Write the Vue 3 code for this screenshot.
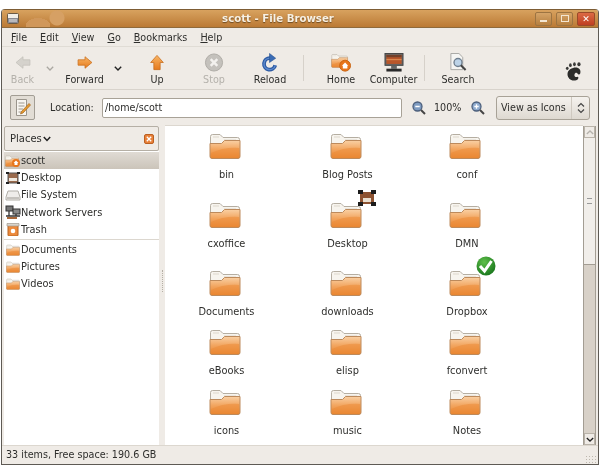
<script setup>
const menus = [['F', 'ile'], ['E', 'dit'], ['V', 'iew'], ['G', 'o'], ['B', 'ookmarks'], ['H', 'elp']]
const rows = [
  [{ n: 'bin' }, { n: 'Blog Posts' }, { n: 'conf' }],
  [{ n: 'cxoffice' }, { n: 'Desktop', e: 'desk' }, { n: 'DMN' }],
  [{ n: 'Documents' }, { n: 'downloads' }, { n: 'Dropbox', e: 'ok' }],
  [{ n: 'eBooks' }, { n: 'elisp' }, { n: 'fconvert' }],
  [{ n: 'icons' }, { n: 'music' }, { n: 'Notes' }],
]
const files = rows.flat()
</script>

<template>
  <div class="window">
    <svg class="defs" width="0" height="0" aria-hidden="true">
      <defs>
        <linearGradient id="fold" x1="0" y1="0" x2="0" y2="1">
          <stop offset="0" stop-color="#f9d0a4" />
          <stop offset="0.5" stop-color="#f2a55f" />
          <stop offset="1" stop-color="#e8842e" />
        </linearGradient>
        <linearGradient id="org" x1="0" y1="0" x2="0" y2="1">
          <stop offset="0" stop-color="#f8b565" />
          <stop offset="1" stop-color="#e67a1c" />
        </linearGradient>
        <radialGradient id="okg" cx=".4" cy=".3" r=".8">
          <stop offset="0" stop-color="#5fbf4a" />
          <stop offset="1" stop-color="#126f18" />
        </radialGradient>
        <symbol id="folder" viewBox="0 0 32 26">
          <path d="M1.500 24V3.500Q1.500 1.500 3.500 1.500H11L14 4.500H28.500Q30.500 4.500 30.500 6.500V24Z" fill="#f7f4ee" stroke="#b5aea2" />
          <path d="M4 4h6M15 7h12" stroke="#ddd7cc" />
          <path d="M1 10.500H12.500L15.500 7.500H31V23.500Q31 25.500 29 25.500H3Q1 25.500 1 23.500Z" fill="url(#fold)" stroke="#bd8a5c" />
          <path d="M2 20Q15 14 30 15V24.500H2Z" fill="#ec8a36" opacity=".5" />
        </symbol>
      </defs>
    </svg>

    <header class="title">
      <svg class="win-icon" width="12" height="11" viewBox="0 0 12 11">
        <rect x=".5" y=".5" width="11" height="10" rx="1" fill="#f2eee8" stroke="#6b5a45" />
        <rect x="1" y="5" width="10" height="5" fill="#8a8a92" />
        <path d="M3 6v3M5 6v3M7 6v3M9 6v3" stroke="#e8e8e8" />
      </svg>
      <div class="title-deco"></div>
      <span class="title-text">scott - File Browser</span>
      <div class="wm">
        <span class="wm-btn"><i class="wm-min"></i></span>
        <span class="wm-btn"><i class="wm-max"></i></span>
        <span class="wm-btn wm-close">✕</span>
      </div>
    </header>

    <nav class="menu">
      <span v-for="m in menus" :key="m[0]"><u>{{ m[0] }}</u>{{ m[1] }}</span>
    </nav>

    <div class="toolbar">
      <div class="tool w-back dim">
        <svg viewBox="-3 -3 26 24"><path d="M1 9 10 1.500V5.500H19V12.500H10V16.500Z" fill="#d5d2cc" stroke="#c3c0ba" /></svg>
        <span>Back</span>
      </div>
      <svg class="drop d-back" width="8" height="5" viewBox="0 0 8 5"><path d="M.8.8 4 4 7.200.8" fill="none" stroke="#aaa7a1" stroke-width="1.300" /></svg>
      <div class="tool w-forward">
        <svg viewBox="-3 -3 26 24"><path d="M19 9 10 1.500V5.500H1V12.500H10V16.500Z" fill="url(#org)" stroke="#c96f1e" /></svg>
        <span>Forward</span>
      </div>
      <svg class="drop d-forward" width="8" height="5" viewBox="0 0 8 5"><path d="M.8.8 4 4 7.200.8" fill="none" stroke="#222" stroke-width="1.400" /></svg>
      <div class="tool w-up">
        <svg viewBox="-3 -2 24 24"><path d="M9 1 17 10H13V19H5V10H1Z" fill="url(#org)" stroke="#c96f1e" /></svg>
        <span>Up</span>
      </div>
      <div class="tool w-stop dim">
        <svg viewBox="0 0 20 20"><circle cx="10" cy="10" r="9" fill="#c4c1bc" stroke="#aeaba5" /><path d="M6.500 6.500 13.500 13.500M13.500 6.500 6.500 13.500" stroke="#f3f1ee" stroke-width="2.600" /></svg>
        <span>Stop</span>
      </div>
      <div class="tool w-reload">
        <svg viewBox="0 0 20 20">
          <path d="M15.500 13A6 6 0 1 1 10 5.500" fill="none" stroke="#2c5aa3" stroke-width="4" />
          <path d="M15.500 13A6 6 0 1 1 10 5.500" fill="none" stroke="#5c8ace" stroke-width="1.500" />
          <path d="M9.500 .5 16 5.500 9.500 10Z" fill="#3b6cb5" stroke="#274f8e" stroke-width=".6" />
        </svg>
        <span>Reload</span>
      </div>
      <i class="tool-sep"></i>
      <div class="tool w-home">
        <svg viewBox="0 0 22 20">
          <use href="#folder" x="0" y="0" width="19" height="16" />
          <circle cx="15.500" cy="13.500" r="6" fill="#e8761c" stroke="#c8620f" />
          <path d="M15.500 10 19 13.500H18V16.500H13V13.500H12Z" fill="#fff" />
        </svg>
        <span>Home</span>
      </div>
      <div class="tool w-computer">
        <svg viewBox="0 0 20 20">
          <rect x=".5" y=".5" width="19" height="12.500" fill="#666" stroke="#444" />
          <rect x="2" y="2" width="16" height="9.500" fill="#b8562a" />
          <path d="M2 2H18V4.500H2Z" fill="#73402a" />
          <path d="M2 7H18" stroke="#e2945a" />
          <path d="M7 13.500H13V16.500H7Z" fill="#666" />
          <rect x="2" y="16.500" width="16" height="3" fill="#2a2a2a" />
        </svg>
        <span>Computer</span>
      </div>
      <i class="tool-sep sep2"></i>
      <div class="tool w-search">
        <svg viewBox="0 0 20 20">
          <path d="M2.500.5H11L15 4.500V17.500H2.500Z" fill="#f5f5f3" stroke="#a5a5a2" />
          <circle cx="10" cy="10" r="4.200" fill="#bcd3e8" stroke="#6f7f8f" stroke-width="1.400" />
          <path d="M13 13 18 18" stroke="#444" stroke-width="2.200" />
        </svg>
        <span>Search</span>
      </div>
      <svg class="foot" width="18" height="21" viewBox="0 0 20 22">
        <path d="M9 7C15 5.500 18 9 17 13C16.500 14.500 14.500 15 14 13.500C13.500 12 11 12 10.500 14.500C10 17 12.500 17.500 13.500 17C15 16.500 15.500 18.500 14 20C11.500 22 5.500 21.500 3.500 17C1.500 12.500 4 8 9 7Z" fill="#2c2c2a" />
        <ellipse cx="2.500" cy="7.500" rx="1.500" ry="1.800" fill="#3a3a38" />
        <ellipse cx="6" cy="4" rx="1.500" ry="2.100" fill="#3a3a38" />
        <ellipse cx="10.500" cy="3" rx="1.500" ry="2.200" fill="#3a3a38" />
        <ellipse cx="15.500" cy="3" rx="1.800" ry="2.300" fill="#3a3a38" />
      </svg>
    </div>

    <div class="location">
      <span class="edit-btn">
        <svg width="16" height="17" viewBox="0 0 16 17">
          <path d="M1.500.5H11.500V16.500H1.500Z" fill="#f7f5f0" stroke="#9a958c" />
          <path d="M3.500 4H9.500M3.500 7H9.500M3.500 10H8M3.500 13H7" stroke="#9c978e" />
          <path d="M14 4.500 15.500 6 8 14 5.500 15 6.500 12.500Z" fill="#e59a2f" stroke="#a4661c" stroke-width=".7" />
        </svg>
      </span>
      <label class="loc-label">Location:</label>
      <div class="loc-input">/home/scott</div>
      <svg class="zoom-a" width="14" height="14" viewBox="0 0 14 14"><circle cx="5.500" cy="5.500" r="4.500" fill="#7f9cc2" stroke="#4c5f7c" stroke-width="1.300" /><path d="M3.300 5.500H7.700" stroke="#fff" stroke-width="1.300" /><path d="M9 9 13 13" stroke="#444" stroke-width="2" /></svg>
      <span class="pct">100%</span>
      <svg class="zoom-b" width="14" height="14" viewBox="0 0 14 14"><circle cx="5.500" cy="5.500" r="4.500" fill="#8fabcf" stroke="#4c5f7c" stroke-width="1.300" /><path d="M3.300 5.500H7.700M5.500 3.300V7.700" stroke="#fff" stroke-width="1.300" /><path d="M9 9 13 13" stroke="#444" stroke-width="2" /></svg>
      <div class="view-select">
        <span class="vs-text">View as Icons</span>
        <span class="vs-arrows">
          <svg width="8" height="12" viewBox="0 0 8 12"><path d="M1 4.500 4 1.500 7 4.500M1 7.500 4 10.500 7 7.500" fill="none" stroke="#444" stroke-width="1.200" /></svg>
        </span>
      </div>
    </div>

    <main class="main">
      <aside class="side">
        <div class="side-head">
          <span class="places">Places</span>
          <svg width="8" height="6" viewBox="0 0 8 6"><path d="M.8 1 4 4.500 7.200 1" fill="none" stroke="#222" stroke-width="1.500" /></svg>
          <svg class="side-close" width="10" height="10" viewBox="0 0 10 10"><rect x=".5" y=".5" width="9" height="9" rx="1.500" fill="#e8813a" stroke="#bb5f20" /><path d="M2.800 2.800 7.200 7.200M7.200 2.800 2.800 7.200" stroke="#fff" stroke-width="1.300" /></svg>
        </div>
        <div class="side-list">
          <div class="side-row sel">
            <svg width="16" height="14" viewBox="0 0 16 14"><use href="#folder" x="0" y="1" width="14" height="12" /><circle cx="11" cy="9" r="4" fill="#e8761c" /><path d="M11 6.500 13.500 9H8.500Z M9.500 9H12.500V11H9.500Z" fill="#fff" /></svg>
            <span>scott</span>
          </div>
          <div class="side-row">
            <svg width="16" height="14" viewBox="0 0 16 14"><rect x="3" y="2" width="10" height="10" fill="#9a6a4c" stroke="#555" /><path d="M1 1H4V3H1ZM12 1H15V3H12ZM1 11H4V13H1ZM12 11H15V13H12Z" fill="#222" /><path d="M4 7H12V10H4Z" fill="#efe9df" /></svg>
            <span>Desktop</span>
          </div>
          <div class="side-row">
            <svg width="16" height="14" viewBox="0 0 16 14"><path d="M3 3H13L15 9V12H1V9Z" fill="#efedea" stroke="#b2afa8" /><path d="M2 10H14" stroke="#9c9992" /></svg>
            <span>File System</span>
          </div>
          <div class="side-row">
            <svg width="16" height="14" viewBox="0 0 16 14"><rect x="1" y="1" width="7" height="5" fill="#777" stroke="#333" /><rect x="8" y="4" width="7" height="5" fill="#8a8a8a" stroke="#333" /><path d="M4 6V11M1 11H15M11 9V11" stroke="#333" stroke-width="1.300" /><rect x="2" y="12" width="10" height="2" fill="#a9683a" /></svg>
            <span>Network Servers</span>
          </div>
          <div class="side-row">
            <svg width="16" height="14" viewBox="0 0 16 14"><rect x="3" y="3" width="10" height="11" rx="1" fill="#ec8a3c" stroke="#b8631f" /><path d="M2 1.500H14V4H2Z" fill="#d9d4cb" stroke="#a09a8f" stroke-width=".7" /><circle cx="8" cy="9" r="2.300" fill="#fff" /></svg>
            <span>Trash</span>
          </div>
          <hr class="side-sep" />
          <div class="side-row">
            <svg width="16" height="14" viewBox="0 0 16 14"><use href="#folder" x="1" y="1" width="14" height="12" /></svg>
            <span>Documents</span>
          </div>
          <div class="side-row">
            <svg width="16" height="14" viewBox="0 0 16 14"><use href="#folder" x="1" y="1" width="14" height="12" /></svg>
            <span>Pictures</span>
          </div>
          <div class="side-row">
            <svg width="16" height="14" viewBox="0 0 16 14"><use href="#folder" x="1" y="1" width="14" height="12" /></svg>
            <span>Videos</span>
          </div>
        </div>
      </aside>

      <div class="pane-handle"><i></i></div>

      <section class="files">
        <div v-for="f in files" :key="f.n" class="file">
          <div class="file-icon">
            <svg width="32" height="26" viewBox="0 0 32 26"><use href="#folder" width="32" height="26" /></svg>
            <svg v-if="f.e === 'desk'" class="emblem em-desk" width="18" height="16" viewBox="0 0 18 16">
              <rect x="2" y="2" width="14" height="12" fill="#8d5230" />
              <path d="M0 0H5V4H0ZM13 0H18V4H13ZM0 12H5V16H0ZM13 12H18V16H13Z" fill="#1c1c1c" />
              <path d="M5 8H13V12H5Z" fill="#e9dfd0" />
            </svg>
            <svg v-if="f.e === 'ok'" class="emblem em-ok" width="20" height="20" viewBox="0 0 20 20">
              <circle cx="10" cy="10" r="9.500" fill="url(#okg)" />
              <path d="M4 10 8.500 15 15.500 5" fill="none" stroke="#fff" stroke-width="3" />
            </svg>
          </div>
          <span class="file-name">{{ f.n }}</span>
        </div>
      </section>

      <div class="scrollbar">
        <span class="sb-btn"><svg width="8" height="5" viewBox="0 0 8 5"><path d="M.8 4 4 1 7.200 4" fill="none" stroke="#b5b2ac" stroke-width="1.300" /></svg></span>
        <span class="sb-thumb"><i></i></span>
        <span class="sb-trough"></span>
        <span class="sb-btn"><svg width="8" height="5" viewBox="0 0 8 5"><path d="M.8 1 4 4 7.200 1" fill="none" stroke="#222" stroke-width="1.300" /></svg></span>
      </div>
    </main>

    <footer class="status">33 items, Free space: 190.6 GB<i class="grip"></i></footer>
  </div>
</template>

<style>
html, body { margin: 0; background: #fff; }
</style>

<style scoped>
.window {
  box-sizing: border-box;
  width: 598px;
  height: 456px;
  margin: 9px 0 0 1px;
  display: flex;
  flex-direction: column;
  background: #efebe6;
  border: 1px solid #5e5a54;
  border-top: 0;
  border-radius: 4px 4px 0 0;
  font-family: "DejaVu Sans", sans-serif;
  font-size: 9.6px;
  color: #2e2e2c;
  overflow: hidden;
  filter: blur(.3px);
}
.defs { flex: none; display: block; }

.title {
  flex: none;
  height: 19px;
  display: flex;
  align-items: center;
  position: relative;
  background: linear-gradient(#d8a25f, #bb7a35);
  border-top: 1px solid #7d5c34;
  border-bottom: 1px solid #8f6a3c;
  box-sizing: border-box;
  padding: 0 3px 0 5px;
}
.win-icon { flex: none; }
.title-deco {
  position: absolute;
  left: 22px;
  top: 0;
  width: 42px;
  height: 17px;
  background:
    radial-gradient(circle at 33px 8px, #d6a064 0 7px, transparent 8px),
    radial-gradient(ellipse 12px 7px at 14px 15px, #d0975a 0 100%, transparent 100%);
}
.title-text {
  position: absolute;
  left: 0;
  right: 44px;
  text-align: center;
  color: #f8f1e4;
  font-weight: bold;
  font-size: 10.200px;
  text-shadow: 0 1px 1px #6d4a20;
}
.wm { margin-left: auto; display: flex; gap: 4px; position: relative; }
.wm-btn {
  box-sizing: border-box;
  width: 17px;
  height: 14px;
  display: flex;
  align-items: center;
  justify-content: center;
  border: 1px solid #9c7442;
  border-radius: 2px;
  background: linear-gradient(#d5a468, #b67f3f);
}
.wm-min { width: 7px; height: 2px; background: #f3e6d2; margin-top: 5px; }
.wm-max { box-sizing: border-box; width: 8px; height: 7px; border: 1px solid #f3e6d2; }
.wm-close {
  width: 18px;
  color: #fff;
  font-size: 9px;
  font-weight: bold;
  background: linear-gradient(#dc6a44, #bf3f22);
  border-color: #9a4a2a;
}

.menu {
  flex: none;
  height: 19px;
  display: flex;
  align-items: center;
  gap: 13px;
  padding-left: 9px;
  box-sizing: border-box;
  border-bottom: 1px solid #e0dcd5;
}

.toolbar {
  flex: none;
  height: 43px;
  display: flex;
  box-sizing: border-box;
  border-bottom: 1px solid #d8d3cc;
}
.tool {
  flex: none;
  display: flex;
  flex-direction: column;
  align-items: center;
  padding-top: 6px;
  box-sizing: border-box;
  height: 42px;
}
.tool svg { width: 20px; height: 19px; display: block; }
.tool span { margin-top: 2px; line-height: 12px; white-space: nowrap; }
.dim { color: #b4b1ab; }
.w-back { width: 41px; }
.w-forward { width: 55px; }
.w-up { width: 66px; }
.w-stop { width: 48px; }
.w-reload { width: 64px; }
.w-home { width: 50px; margin-left: 10px; }
.w-computer { width: 55px; }
.w-search { width: 42px; margin-left: 11px; }
.drop { flex: none; align-self: flex-start; margin: 19px 3px 0; }
.d-forward { margin: 19px 2px 0 2px; }
.tool-sep { flex: none; width: 1px; height: 26px; margin: 8px 2px 0 1px; background: #d6d1ca; }
.sep2 { margin-left: 3px; margin-right: 1px; }
.foot { flex: none; margin: 14px 15px 0 auto; }

.location {
  flex: none;
  height: 35px;
  display: flex;
  align-items: center;
  padding-left: 8px;
  box-sizing: border-box;
}
.edit-btn {
  flex: none;
  box-sizing: border-box;
  width: 25px;
  height: 25px;
  display: flex;
  align-items: center;
  justify-content: center;
  border: 1px solid #a29d94;
  border-radius: 2px;
  background: #e2ddd5;
}
.loc-label { margin-left: 15px; width: 52px; flex: none; }
.loc-input {
  flex: none;
  box-sizing: border-box;
  width: 300px;
  height: 20px;
  line-height: 18px;
  padding-left: 2px;
  background: #fff;
  border: 1px solid #a8a297;
  border-radius: 2px;
}
.zoom-a { flex: none; margin-left: 10px; }
.pct { flex: none; width: 28px; margin-left: 8px; }
.zoom-b { flex: none; margin-left: 9px; }
.view-select {
  flex: none;
  box-sizing: border-box;
  margin-left: 11px;
  width: 94px;
  height: 24px;
  display: flex;
  align-items: center;
  border: 1px solid #a8a297;
  border-radius: 3px;
  background: linear-gradient(#f5f2ee, #ded9d1);
}
.vs-text { flex: 1; padding-left: 4px; white-space: nowrap; }
.vs-arrows { flex: none; width: 17px; height: 100%; display: flex; align-items: center; justify-content: center; border-left: 1px solid #cfc9c0; }

.main { flex: 1; min-height: 0; display: flex; }
.side {
  flex: none;
  width: 155px;
  margin-left: 2px;
  display: flex;
  flex-direction: column;
}
.side-head {
  flex: none;
  box-sizing: border-box;
  height: 25px;
  display: flex;
  align-items: center;
  gap: 1px;
  margin-top: 1px;
  padding: 0 4px 0 5px;
  border: 1px solid #b5afa5;
  border-radius: 2px;
  font-size: 10px;
}
.side-close { margin-left: auto; }
.side-list { flex: 1; background: #fff; display: flex; flex-direction: column; padding-top: 1px; }
.side-row {
  flex: none;
  height: 17.200px;
  display: flex;
  align-items: center;
  padding-left: 1px;
  font-size: 9.800px;
}
.side-row svg { flex: none; }
.sel { background: linear-gradient(#e0dbd4, #cbc4ba); }
.side-sep { margin: 1px 0; width: 100%; height: 1px; border: 0; background: #dcd7cf; flex: none; }
.pane-handle { flex: none; width: 6px; display: flex; align-items: center; justify-content: center; }
.pane-handle i { width: 0; height: 22px; border-left: 1px dotted #b5afa5; margin-top: -8px; }
.files {
  flex: 1;
  min-width: 0;
  background: #fff;
  overflow: hidden;
  display: grid;
  grid-template-columns: 121px 121px 118px;
  grid-template-rows: 69px 68px 59px 60px 60px;
  padding-left: 1px;
  align-content: start;
  padding-top: 7px;
  border-top: 1px solid #dcd7cf;
}
.file { display: flex; flex-direction: column; align-items: center; }
.file-icon { position: relative; width: 32px; height: 27px; margin-right: 4px; }
.file-icon > svg:first-child { display: block; }
.emblem { position: absolute; display: block; }
.em-desk { left: 28px; top: -12px; }
.em-ok { left: 27px; top: -14px; }
.file-name { margin-top: 8px; line-height: 14px; font-size: 9.800px; }
.scrollbar {
  flex: none;
  width: 13px;
  margin: 1px 2px 0 0;
  display: flex;
  flex-direction: column;
  background: #d8d1c8;
  border: 1px solid #a39d93;
  border-width: 0 1px;
  box-sizing: border-box;
}
.sb-btn {
  flex: none;
  height: 12px;
  display: flex;
  align-items: center;
  justify-content: center;
  background: #efebe6;
  border: 1px solid #b9b3a9;
  box-sizing: border-box;
}
.sb-thumb {
  flex: none;
  height: 127px;
  display: flex;
  align-items: center;
  justify-content: center;
  background: #f1eeea;
  border-bottom: 1px solid #a39d93;
  box-sizing: border-box;
}
.sb-thumb i { width: 5px; height: 6px; border-top: 1px solid #999; border-bottom: 1px solid #999; box-sizing: border-box; }
.sb-trough { flex: 1; }
.status {
  flex: none;
  height: 19px;
  line-height: 18px;
  padding-left: 4px;
  box-sizing: border-box;
  border-top: 1px solid #dcd7cf;
  position: relative;
}
.grip {
  position: absolute;
  right: 1px;
  bottom: 1px;
  width: 12px;
  height: 8px;
  background: radial-gradient(circle, #bdb7ad 0 .7px, transparent 1px) 0 0 / 3px 3px;
}
</style>
